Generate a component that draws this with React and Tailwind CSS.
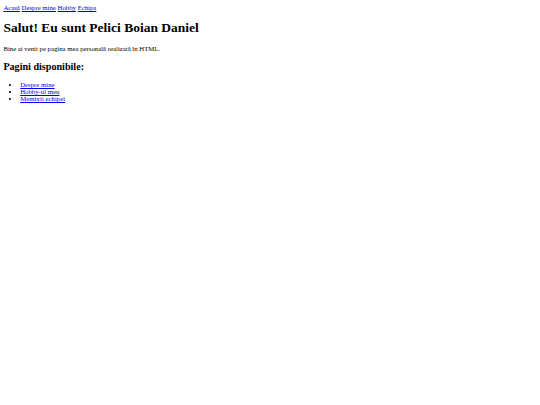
export default function App() {
  const links = ["Despre mine", "Hobby-ul meu", "Membrii echipei"];
  return (
    <div className="min-h-[405px] bg-white px-[3.375px] pt-[4.4px] pb-[3.375px] text-[6.75px] leading-[normal] text-black font-['Liberation_Serif',serif]">
      <nav>
        <a href="#" className="text-[#0000ee] underline">Acasă</a>{" "}
        <a href="#" className="text-[#0000ee] underline">Despre mine</a>{" "}
        <a href="#" className="text-[#0000ee] underline">Hobby</a>{" "}
        <a href="#" className="text-[#0000ee] underline">Echipa</a>
      </nav>
      <h1 className="my-[9.05px] text-[13.5px] leading-[normal] font-bold">Salut! Eu sunt Pelici Boian Daniel</h1>
      <p className="my-[6.75px]">Bine ai venit pe pagina mea personală realizată în HTML.</p>
      <h2 className="mt-[8.4px] mb-[9.2px] text-[10.125px] leading-[normal] font-bold">Pagini disponibile:</h2>
      <ul className="my-[6.75px] list-disc pl-[16.875px]">
        {links.map((l) => (
          <li key={l}>
            <a href="#" className="text-[#0000ee] underline">{l}</a>
          </li>
        ))}
      </ul>
    </div>
  );
}
